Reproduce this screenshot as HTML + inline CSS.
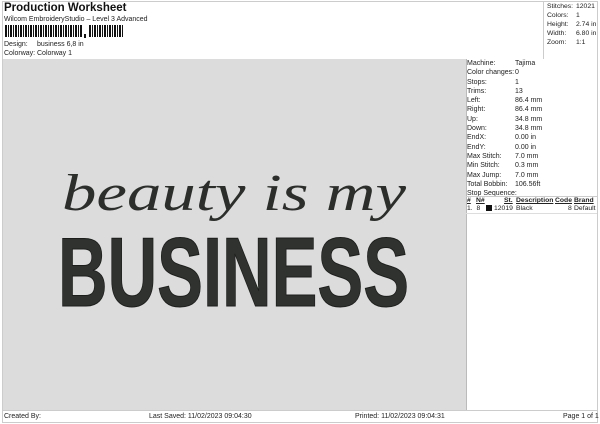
<!DOCTYPE html>
<html><head><style>
body{margin:0;width:600px;height:424px;background:#fff;font-family:"Liberation Sans",sans-serif;color:#222;position:relative;overflow:hidden}
.a{position:absolute;font-size:7px;line-height:9px;white-space:nowrap}
.b{position:absolute}
</style></head><body>
<div class="b" style="left:2px;top:1px;width:594px;height:420px;border:1px solid #ccc"></div>
<div class="b" style="left:3px;top:59px;width:463px;height:351px;background:#dcdcdc"></div>
<div class="b" style="left:466px;top:59px;width:1px;height:351px;background:#bbb"></div>
<div class="b" style="left:543px;top:2px;width:1px;height:57px;background:#ccc"></div>
<div class="b" style="left:3px;top:410px;width:594px;height:1px;background:#ccc"></div>
<div class="a" style="left:4px;top:2px;font-size:11.5px;line-height:13px;font-weight:bold;color:#111">Production Worksheet</div>
<div class="a" style="left:4px;top:15px">Wilcom EmbroideryStudio – Level 3 Advanced</div>
<svg class="b" style="left:5px;top:25px" width="120" height="14">
<g fill="#111">
<rect x="0" y="0" width="2" height="12"/><rect x="3" y="0" width="1" height="12"/><rect x="5" y="0" width="2" height="12"/><rect x="8" y="0" width="1" height="12"/><rect x="10" y="0" width="2" height="12"/><rect x="13" y="0" width="1" height="12"/><rect x="15" y="0" width="2" height="12"/><rect x="18" y="0" width="1" height="12"/><rect x="20" y="0" width="2" height="12"/><rect x="23" y="0" width="1" height="12"/><rect x="25" y="0" width="2" height="12"/><rect x="28" y="0" width="1" height="12"/><rect x="30" y="0" width="2" height="12"/><rect x="33" y="0" width="1" height="12"/><rect x="35" y="0" width="2" height="12"/><rect x="38" y="0" width="1" height="12"/><rect x="40" y="0" width="2" height="12"/><rect x="43" y="0" width="1" height="12"/><rect x="45" y="0" width="2" height="12"/><rect x="48" y="0" width="1" height="12"/><rect x="50" y="0" width="2" height="12"/><rect x="53" y="0" width="1" height="12"/><rect x="55" y="0" width="2" height="12"/><rect x="58" y="0" width="1" height="12"/><rect x="60" y="0" width="2" height="12"/><rect x="63" y="0" width="1" height="12"/><rect x="65" y="0" width="2" height="12"/><rect x="68" y="0" width="1" height="12"/><rect x="70" y="0" width="2" height="12"/><rect x="73" y="0" width="1" height="12"/><rect x="75" y="0" width="2" height="12"/><rect x="79" y="9" width="2" height="4"/><rect x="84" y="0" width="2" height="12"/><rect x="87" y="0" width="1" height="12"/><rect x="89" y="0" width="2" height="12"/><rect x="92" y="0" width="1" height="12"/><rect x="94" y="0" width="2" height="12"/><rect x="97" y="0" width="1" height="12"/><rect x="99" y="0" width="2" height="12"/><rect x="102" y="0" width="1" height="12"/><rect x="104" y="0" width="2" height="12"/><rect x="107" y="0" width="1" height="12"/><rect x="109" y="0" width="2" height="12"/><rect x="112" y="0" width="1" height="12"/><rect x="114" y="0" width="2" height="12"/><rect x="117" y="0" width="1" height="12"/>
</g></svg>
<div class="a" style="left:4px;top:40px">Design:</div><div class="a" style="left:37px;top:40px">business 6,8 in</div>
<div class="a" style="left:4px;top:49px">Colorway:</div><div class="a" style="left:37px;top:49px">Colorway 1</div>

<div class="a" style="left:547px;top:2px;font-size:6.8px">Stitches:</div><div class="a" style="left:576px;top:2px;font-size:6.8px">12021</div>
<div class="a" style="left:547px;top:11px;font-size:6.8px">Colors:</div><div class="a" style="left:576px;top:11px;font-size:6.8px">1</div>
<div class="a" style="left:547px;top:20px;font-size:6.8px">Height:</div><div class="a" style="left:576px;top:20px;font-size:6.8px">2.74 in</div>
<div class="a" style="left:547px;top:29px;font-size:6.8px">Width:</div><div class="a" style="left:576px;top:29px;font-size:6.8px">6.80 in</div>
<div class="a" style="left:547px;top:38px;font-size:6.8px">Zoom:</div><div class="a" style="left:576px;top:38px;font-size:6.8px">1:1</div>

<div class="a" style="left:467px;top:59px;line-height:9.3px">Machine:<br>Color changes:<br>Stops:<br>Trims:<br>Left:<br>Right:<br>Up:<br>Down:<br>EndX:<br>EndY:<br>Max Stitch:<br>Min Stitch:<br>Max Jump:<br>Total Bobbin:<br>Stop Sequence:</div>
<div class="a" style="left:515px;top:59px;line-height:9.3px">Tajima<br>0<br>1<br>13<br>86.4 mm<br>86.4 mm<br>34.8 mm<br>34.8 mm<br>0.00 in<br>0.00 in<br>7.0 mm<br>0.3 mm<br>7.0 mm<br>106.56ft</div>
<div class="b" style="left:466px;top:196px;width:131px;height:1px;background:#ccc"></div>
<div class="a" style="left:467px;top:196px;font-weight:bold;text-decoration:underline;font-size:6.8px">#</div>
<div class="a" style="left:476px;top:196px;font-weight:bold;text-decoration:underline;font-size:6.8px">N#</div>
<div class="a" style="left:504px;top:196px;font-weight:bold;text-decoration:underline;font-size:6.8px">St.</div>
<div class="a" style="left:516px;top:196px;font-weight:bold;text-decoration:underline;font-size:6.8px">Description</div>
<div class="a" style="left:555px;top:196px;font-weight:bold;text-decoration:underline;font-size:6.8px">Code</div>
<div class="a" style="left:574px;top:196px;font-weight:bold;text-decoration:underline;font-size:6.8px">Brand</div>
<div class="a" style="left:467px;top:204px;font-size:6.8px">1.&nbsp; 8</div>
<div class="b" style="left:486px;top:205px;width:6px;height:6px;background:#111"></div>
<div class="a" style="left:494px;top:204px;font-size:6.8px">12019</div>
<div class="a" style="left:516px;top:204px;font-size:6.8px">Black</div>
<div class="a" style="left:568px;top:204px;font-size:6.8px">8</div>
<div class="a" style="left:574px;top:204px;font-size:6.8px">Default</div>
<div class="b" style="left:466px;top:213px;width:131px;height:1px;background:#ddd"></div>

<svg class="b" style="left:0;top:0" width="600" height="424">
<text x="62" y="210" textLength="344" lengthAdjust="spacingAndGlyphs" font-family="Liberation Serif" font-style="italic" font-size="52" fill="#2b2e2b">beauty is my</text>
<text x="58" y="306" textLength="351" lengthAdjust="spacingAndGlyphs" font-family="Liberation Sans Narrow, Liberation Sans" font-weight="bold" font-size="98" fill="#2f322f" stroke="#1c1e1c" stroke-width="1">BUSINESS</text>
</svg>

<div class="a" style="left:4px;top:412px">Created By:</div>
<div class="a" style="left:149px;top:412px">Last Saved: 11/02/2023 09:04:30</div>
<div class="a" style="left:355px;top:412px">Printed: 11/02/2023 09:04:31</div>
<div class="a" style="left:563px;top:412px">Page 1 of 1</div>
</body></html>
